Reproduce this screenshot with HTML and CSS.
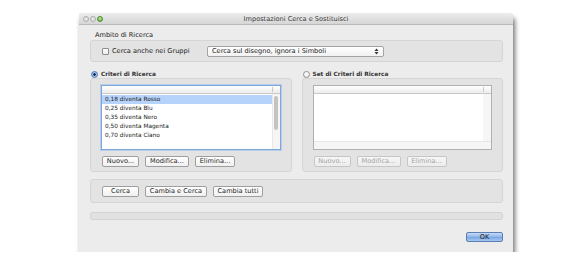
FILE: index.html
```html
<!DOCTYPE html>
<html lang="it">
<head>
    <meta charset="UTF-8">
    <title>Impostazioni Cerca e Sostituisci</title>
    <link rel="stylesheet" href="styles.css">
</head>
<body>
    <div class="window">
        <div class="titlebar">
            <div class="lights">
                <span class="light"></span>
                <span class="light"></span>
                <span class="light green"></span>
            </div>
            <div class="title">Impostazioni Cerca e Sostituisci</div>
        </div>

        <div class="content">
            <div class="section-label">Ambito di Ricerca</div>
            <div class="box scope">
                <label class="check"><span class="checkbox"></span>Cerca anche nei Gruppi</label>
                <div class="popup">
                    <span>Cerca sul disegno, ignora i Simboli</span>
                    <svg class="arrows" width="5" height="7" viewBox="0 0 5 7">
                        <path d="M0.5 3 L2.5 0.5 L4.5 3 Z M0.5 4 L2.5 6.5 L4.5 4 Z" fill="#333"/>
                    </svg>
                </div>
            </div>

            <div class="columns">
                <div class="column">
                    <div class="radio-row"><span class="radio on"></span>Criteri di Ricerca</div>
                    <div class="box group">
                        <div class="list focused">
                            <div class="list-head"><span class="head-cell"></span></div>
                            <div class="list-body">
                                <ul class="rows">
                                    <li class="selected">0,18 diventa Rosso</li>
                                    <li>0,25 diventa Blu</li>
                                    <li>0,35 diventa Nero</li>
                                    <li>0,50 diventa Magenta</li>
                                    <li>0,70 diventa Ciano</li>
                                </ul>
                                <div class="scrollbar"><span class="thumb"></span></div>
                            </div>
                        </div>
                        <div class="buttons">
                            <button class="btn w-nuovo">Nuovo...</button>
                            <button class="btn w-modifica">Modifica...</button>
                            <button class="btn w-elimina">Elimina...</button>
                        </div>
                    </div>
                </div>

                <div class="column">
                    <div class="radio-row"><span class="radio"></span>Set di Criteri di Ricerca</div>
                    <div class="box group">
                        <div class="list">
                            <div class="list-head"><span class="head-cell"></span></div>
                            <div class="list-body">
                                <div class="empty-area"></div>
                                <div class="side-strip"></div>
                            </div>
                            <div class="bottom-strip"></div>
                        </div>
                        <div class="buttons">
                            <button class="btn w-nuovo" disabled>Nuovo...</button>
                            <button class="btn w-modifica" disabled>Modifica...</button>
                            <button class="btn w-elimina" disabled>Elimina...</button>
                        </div>
                    </div>
                </div>
            </div>

            <div class="box actions">
                <button class="btn w-cerca">Cerca</button>
                <button class="btn w-cambia">Cambia e Cerca</button>
                <button class="btn w-tutti">Cambia tutti</button>
            </div>

            <div class="progress"></div>

            <div class="footer">
                <button class="btn default">OK</button>
            </div>
        </div>
    </div>
</body>
</html>
```

FILE: styles.css
```css
/* Global */
* {
    box-sizing: border-box;
}

body {
    margin: 0;
    background: #ffffff;
    font-family: "DejaVu Sans", Verdana, sans-serif;
    color: #222;
}

/* Window */
.window {
    margin: 13px 0 0 79px;
    width: 434px;
    height: 239px;
    background: #ececec;
    border-radius: 3px 3px 0 0;
    box-shadow: 2px 5px 5px rgba(0, 0, 0, 0.55);
    overflow: hidden;
}

.titlebar {
    height: 12px;
    display: flex;
    align-items: center;
    background: linear-gradient(#ececec, #d6d6d6);
    border-bottom: 1px solid #b9b9b9;
}

.lights {
    display: flex;
    gap: 1px;
    padding-left: 4px;
}

.light {
    width: 6px;
    height: 6px;
    border-radius: 50%;
    background: #e4e4e4;
    border: 1px solid #aaa;
}

.light.green {
    background: radial-gradient(circle at 50% 35%, #c6ef9c, #5aa83a);
    border-color: #4b8a32;
}

.title {
    flex: 1;
    text-align: center;
    font-size: 6.6px;
    color: #3a3a3a;
    margin-right: 24px;
}

/* Content */
.content {
    padding: 0 10px 0 11px;
}

.section-label {
    font-size: 6.6px;
    height: 8px;
    line-height: 8px;
    margin-top: 6px;
    padding-left: 5px;
}

.box {
    background: #e3e3e3;
    border: 1px solid #d5d5d5;
    border-radius: 3px;
}

.scope {
    margin-top: 1px;
    height: 22px;
    display: flex;
    align-items: center;
    padding-left: 11px;
}

.check {
    display: flex;
    align-items: center;
    font-size: 6.6px;
    width: 105px;
}

.checkbox {
    width: 7px;
    height: 7px;
    border: 1px solid #8d8d8d;
    border-radius: 1px;
    background: linear-gradient(#ffffff, #ececec);
    margin-right: 3px;
}

.popup {
    width: 177px;
    height: 11px;
    display: flex;
    align-items: center;
    justify-content: space-between;
    padding: 0 4px 0 4px;
    font-size: 6.6px;
    background: linear-gradient(#ffffff, #f1f1f1);
    border: 1px solid #a3a3a3;
    border-radius: 2px;
}

/* Columns */
.columns {
    display: flex;
    gap: 10px;
    margin-top: 8px;
}

.column {
    flex: 1;
}

.radio-row {
    display: flex;
    align-items: center;
    height: 8px;
    font-size: 5.8px;
    font-weight: bold;
    color: #333;
    margin-left: 1px;
}

.radio {
    width: 7px;
    height: 7px;
    border-radius: 50%;
    border: 1px solid #8f8f8f;
    background: linear-gradient(#ffffff, #eaeaea);
    margin-right: 3px;
}

.radio.on {
    border-color: #4d79b8;
    background: radial-gradient(circle, #1c2f4a 0 1px, #8fb5e8 1.5px, #c9dcf5);
}

.group {
    height: 94px;
    padding: 6px 10px 0 10px;
}

/* Lists */
.list {
    height: 65px;
    background: #ffffff;
    border: 1px solid #b0b0b0;
    display: flex;
    flex-direction: column;
}

.list.focused {
    border-color: #7ea6d8;
    box-shadow: 0 0 0 1px #b6cdeb;
}

.list-head {
    height: 8px;
    background: linear-gradient(#ffffff, #ececec);
    border-bottom: 1px solid #c9c9c9;
    display: flex;
    justify-content: flex-end;
}

.head-cell {
    width: 8px;
    border-left: 1px solid #c8c8c8;
    margin: 1px 0;
}

.list-body {
    flex: 1;
    display: flex;
}

.rows {
    flex: 1;
    list-style: none;
    margin: 0;
    padding: 1px 0 0 0;
}

.rows li {
    height: 9px;
    line-height: 9px;
    font-size: 5.8px;
    padding-left: 3px;
}

.rows li.selected {
    background: #b5d3fb;
}

.scrollbar {
    width: 8px;
    background: #f6f6f6;
    border-left: 1px solid #e8e8e8;
    display: flex;
    justify-content: center;
    padding-top: 2px;
}

.thumb {
    width: 4px;
    height: 34px;
    border-radius: 2px;
    background: #c3c3c3;
}

.empty-area {
    flex: 1;
}

.side-strip {
    width: 8px;
    background: #f6f6f6;
}

.bottom-strip {
    height: 8px;
    background: #f6f6f6;
    border-top: 1px solid #e6e6e6;
}

/* Buttons */
.buttons {
    display: flex;
    gap: 6px;
    margin-top: 6px;
    padding-left: 1px;
}

.btn {
    height: 11px;
    padding: 0;
    font-family: "DejaVu Sans", Verdana, sans-serif;
    font-size: 6.6px;
    line-height: 9px;
    color: #1e1e1e;
    background: linear-gradient(#ffffff, #f0f0f0);
    border: 1px solid #9e9e9e;
    border-radius: 2px;
}

.btn:disabled {
    color: #a3a3a3;
    border-color: #c6c6c6;
    background: linear-gradient(#f6f6f6, #ececec);
}

.w-nuovo { width: 37px; }
.w-modifica { width: 44px; }
.w-elimina { width: 40px; }
.w-cerca { width: 37px; }
.w-cambia { width: 62px; }
.w-tutti { width: 50px; }

.actions {
    margin-top: 7px;
    height: 24px;
    display: flex;
    align-items: center;
    gap: 6px;
    padding-left: 11px;
}

.progress {
    margin-top: 9px;
    height: 8px;
    border: 1px solid #d2d2d2;
    border-radius: 3px;
    background: #e2e2e2;
}

.footer {
    display: flex;
    justify-content: flex-end;
    margin-top: 12px;
}

.btn.default {
    width: 37px;
    height: 10px;
    background: linear-gradient(#c6dcf5, #8bb4e8 50%, #78a6e2 51%, #a6c8f0);
    border-color: #5b7fb5;
}
```
